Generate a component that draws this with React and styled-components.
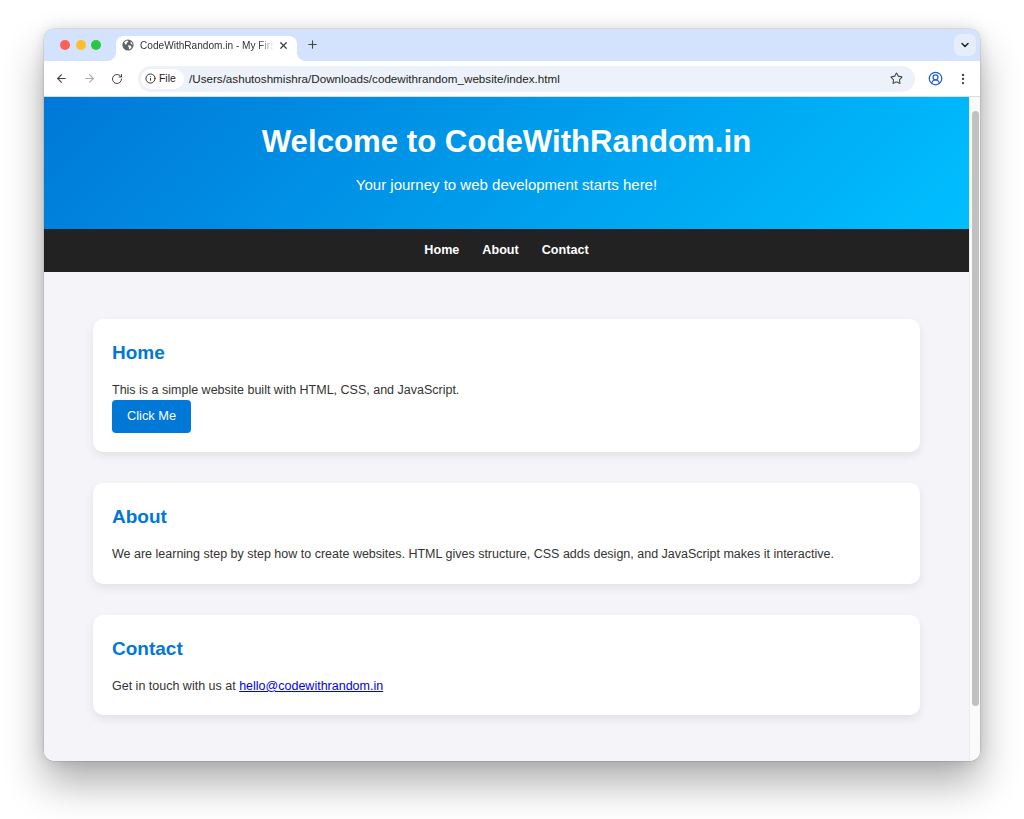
import React from "react";
import styled, { createGlobalStyle } from "styled-components";
import { ArrowLeft, ArrowRight, RotateCw, Info, Star, X, Plus, ChevronDown, EllipsisVertical, CircleUserRound } from "lucide-react";

const Global = createGlobalStyle`
  html, body { margin: 0; padding: 0; background: #fff; }
  body { font-family: "Liberation Sans", Arial, sans-serif; height: 819px; overflow: hidden; }
`;

const Stage = styled.div`
  padding: 29px 44px 58px;
`;
const Win = styled.div`
  width: 936px;
  height: 732px;
  border-radius: 10px;
  overflow: hidden;
  display: flex;
  flex-direction: column;
  background: #fff;
  box-shadow: 0 22px 40px rgba(0,0,0,.32), 0 0 14px rgba(0,0,0,.12), 0 0 0 .5px rgba(0,0,0,.16);
`;
const TabStrip = styled.div`
  height: 32px;
  flex: none;
  background: #d3e3fd;
  display: flex;
  align-items: flex-end;
  padding-left: 16px;
`;
const Lights = styled.div`
  display: flex;
  gap: 5.5px;
  align-self: center;
  margin-right: 15px;
`;
const Light = styled.span`
  width: 10px;
  height: 10px;
  border-radius: 50%;
  background: ${p => p.$c};
`;
const Tab = styled.div`
  position: relative;
  width: 181px;
  height: 25px;
  background: #fff;
  border-radius: 8px 8px 0 0;
  display: flex;
  align-items: center;
  padding: 0 8px 7px 6px;
  box-sizing: border-box;
  color: #3c4043;
  &::before, &::after {
    content: "";
    position: absolute;
    bottom: 0;
    width: 8px;
    height: 8px;
  }
  &::before {
    left: -8px;
    background: radial-gradient(circle at 0 0, transparent 7.5px, #fff 8px);
  }
  &::after {
    right: -8px;
    background: radial-gradient(circle at 100% 0, transparent 7.5px, #fff 8px);
  }
`;
const Favicon = styled.svg`
  width: 12px;
  height: 12px;
  flex: none;
`;
const TabTitle = styled.span`
  flex: 1;
  margin-left: 6px;
  font-size: 10.1px;
  white-space: nowrap;
  overflow: hidden;
  color: #333;
  mask-image: linear-gradient(90deg, #000 86%, transparent 97%);
`;
const NewTab = styled.span`
  display: flex;
  align-self: center;
  margin: -1px 0 0 9px;
  color: #444;
`;
const Spacer = styled.div`
  flex: 1;
`;
const TabMenu = styled.span`
  align-self: center;
  width: 22px;
  height: 22px;
  margin-right: 4px;
  border-radius: 7px;
  background: #e6eefc;
  display: flex;
  align-items: center;
  justify-content: center;
  color: #222;
`;
const Toolbar = styled.div`
  height: 36px;
  flex: none;
  display: flex;
  align-items: center;
  background: #fff;
  border-bottom: 1px solid #d9dde3;
  box-sizing: border-box;
  padding: 0 0 0 11px;
`;
const NavIcon = styled.span`
  display: flex;
  width: 13px;
  margin-right: 15px;
  color: ${p => (p.$off ? "#a9abae" : "#444")};
`;
const Omni = styled.div`
  width: 777px;
  height: 26px;
  margin-left: -1px;
  border-radius: 13px;
  background: #edf2fa;
  display: flex;
  align-items: center;
  padding: 0 12px 0 3px;
  box-sizing: border-box;
`;
const Chip = styled.div`
  width: 43px;
  height: 20px;
  border-radius: 10px;
  background: #fff;
  display: flex;
  align-items: center;
  gap: 3px;
  padding-left: 4px;
  box-sizing: border-box;
  font-size: 10.4px;
  color: #222;
`;
const Url = styled.span`
  flex: 1;
  margin-left: 5px;
  font-size: 11.65px;
  color: #222;
  white-space: nowrap;
`;
const EndIcon = styled.span`
  display: flex;
  margin-left: ${p => p.$ml}px;
  color: ${p => p.$c};
`;
const Viewport = styled.div`
  flex: 1;
  display: flex;
  min-height: 0;
`;
const Page = styled.div`
  flex: 1;
  background: #f4f4f9;
  display: flex;
  flex-direction: column;
`;
const Scrollbar = styled.div`
  width: 11px;
  flex: none;
  background: #fafafa;
  border-left: 1px solid #ececec;
  box-sizing: border-box;
  padding: 14px 1px 0 2px;
`;
const Thumb = styled.div`
  height: 595px;
  border-radius: 4px;
  background: #c1c1c1;
`;
const Hero = styled.header`
  height: 132px;
  flex: none;
  box-sizing: border-box;
  background: linear-gradient(135deg, #0078d7, #00bfff);
  color: #fff;
  text-align: center;
  padding-top: 26px;
`;
const HeroTitle = styled.h1`
  margin: 0;
  font-size: 31.2px;
  line-height: 37px;
  font-weight: 700;
`;
const HeroSub = styled.p`
  margin: 16px 0 0;
  font-size: 15px;
  line-height: 17px;
`;
const Nav = styled.nav`
  height: 42.5px;
  flex: none;
  background: #222;
  display: flex;
  justify-content: center;
  align-items: center;
  gap: 23px;
`;
const NavLink = styled.a`
  color: #fff;
  font-size: 12.6px;
  font-weight: 700;
`;
const Main = styled.main`
  padding: 47.5px 49px 0;
  display: flex;
  flex-direction: column;
  gap: 31.2px;
`;
const Card = styled.section`
  background: #fff;
  border-radius: 10px;
  padding: 19px;
  box-shadow: 0 4px 10px rgba(0,0,0,.08);
`;
const CardTitle = styled.h2`
  margin: 0 0 12px;
  font-size: 19px;
  line-height: 30px;
  font-weight: 700;
  color: #0078d7;
`;
const Body = styled.p`
  margin: 0;
  font-size: 12.5px;
  line-height: 20.5px;
  color: #333;
`;
const Mail = styled.a`
  color: #0000ee;
  text-decoration: underline;
`;
const Action = styled.button`
  display: block;
  width: 79px;
  height: 33px;
  margin: -1px 0 0.5px;
  padding: 0 0 1px;
  border: none;
  border-radius: 4px;
  background: #0078d7;
  color: #fff;
  font: 12.8px "Liberation Sans", Arial, sans-serif;
`;

export default function App() {
  return (
    <>
      <Global />
      <Stage>
        <Win>
          <TabStrip>
            <Lights>
              <Light $c="#ff5f57" />
              <Light $c="#febc2e" />
              <Light $c="#28c840" />
            </Lights>
            <Tab>
              <Favicon viewBox="0 0 12 12">
                <circle cx="6" cy="6" r="5.6" fill="#5f6368" />
                <path d="M2.2 3.2 4.6 1.4l1.8.5-.6 1.4-1.4.5.5 1.3-1.3.6zM6.4 6.2l2.6.5.6 1.5-1.6 2-1-.3-.2-2-1-.7zM8.4 2.4l1.6 1.4.7 2-1.8-.7z" fill="#fff" />
              </Favicon>
              <TabTitle>CodeWithRandom.in - My First Website</TabTitle>
              <X size={11} strokeWidth={2.6} />
            </Tab>
            <NewTab><Plus size={13} /></NewTab>
            <Spacer />
            <TabMenu><ChevronDown size={12} strokeWidth={3} /></TabMenu>
          </TabStrip>
          <Toolbar>
            <NavIcon><ArrowLeft size={13} /></NavIcon>
            <NavIcon $off><ArrowRight size={13} /></NavIcon>
            <NavIcon><RotateCw size={12} /></NavIcon>
            <Omni>
              <Chip><Info size={11} />File</Chip>
              <Url>/Users/ashutoshmishra/Downloads/codewithrandom_website/index.html</Url>
              <Star size={13} color="#444" />
            </Omni>
            <EndIcon $ml={13} $c="#1f5fd1"><CircleUserRound size={15} /></EndIcon>
            <EndIcon $ml={13} $c="#444"><EllipsisVertical size={14} /></EndIcon>
          </Toolbar>
          <Viewport>
            <Page>
              <Hero>
                <HeroTitle>Welcome to CodeWithRandom.in</HeroTitle>
                <HeroSub>Your journey to web development starts here!</HeroSub>
              </Hero>
              <Nav>
                <NavLink>Home</NavLink>
                <NavLink>About</NavLink>
                <NavLink>Contact</NavLink>
              </Nav>
              <Main>
                <Card>
                  <CardTitle>Home</CardTitle>
                  <Body>This is a simple website built with HTML, CSS, and JavaScript.</Body>
                  <Action>Click Me</Action>
                </Card>
                <Card>
                  <CardTitle>About</CardTitle>
                  <Body>We are learning step by step how to create websites. HTML gives structure, CSS adds design, and JavaScript makes it interactive.</Body>
                </Card>
                <Card>
                  <CardTitle>Contact</CardTitle>
                  <Body>Get in touch with us at <Mail href="#">hello@codewithrandom.in</Mail></Body>
                </Card>
              </Main>
            </Page>
            <Scrollbar><Thumb /></Scrollbar>
          </Viewport>
        </Win>
      </Stage>
    </>
  );
}
